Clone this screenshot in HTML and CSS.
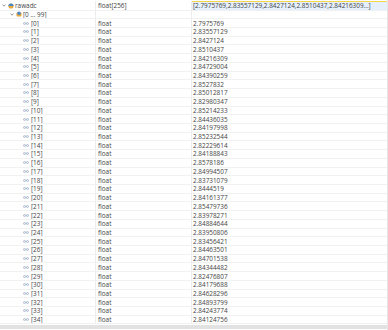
FILE: index.html
```html
<!DOCTYPE html>
<html lang="en">
  <head>
    <meta charset="UTF-8" />
    <title>Variables</title>
    <link rel="stylesheet" href="styles.css">
  </head>

  <body>
    <div class="view">
      <div class="tree" id="tree">
        <div class="row top">
          <div class="cell name lvl0">
            <svg class="twisty" viewBox="0 0 4 3"><path d="M0.5 0.6 L2 2.2 L3.5 0.6" fill="none" stroke="#6a6a6a" stroke-width="0.7"/></svg>
            <svg class="ico" viewBox="0 0 6 6"><circle cx="3" cy="3" r="2.6" fill="#e7a93a"/><path d="M0.4 3 A2.6 2.6 0 0 1 5.6 3 Z" fill="#4a86c8"/></svg>
            <span>rawadc</span>
          </div>
          <div class="cell type">float[256]</div>
          <div class="cell value sel">[2.7975769,2.83557129,2.8427124,2.8510437,2.84216309...]</div>
        </div>
        <div class="row">
          <div class="cell name lvl1">
            <svg class="twisty" viewBox="0 0 4 3"><path d="M0.5 0.6 L2 2.2 L3.5 0.6" fill="none" stroke="#6a6a6a" stroke-width="0.7"/></svg>
            <svg class="ico" viewBox="0 0 6 6"><rect x="0.5" y="1.5" width="5" height="4" rx="0.8" fill="#e7a93a"/><circle cx="3" cy="2.2" r="1.8" fill="#4a86c8"/></svg>
            <span>[0 ... 99]</span>
          </div>
          <div class="cell type"></div>
          <div class="cell value"></div>
        </div>
      </div>
      <div class="hscroll"></div>
    </div>

    <script>
      // elementy tablicy
      var values = [
        "2.7975769", "2.83557129", "2.8427124", "2.8510437", "2.84216309",
        "2.84729004", "2.84390259", "2.8527832", "2.85012817", "2.82980347",
        "2.85214233", "2.84436035", "2.84197998", "2.85232544", "2.82229614",
        "2.84188843", "2.8578186", "2.84994507", "2.83731079", "2.8444519",
        "2.84161377", "2.85479736", "2.83978271", "2.84884644", "2.83950806",
        "2.83456421", "2.84463501", "2.84701538", "2.84344482", "2.82476807",
        "2.84179688", "2.84628296", "2.84893799", "2.84243774", "2.84124756"
      ];
      var tree = document.getElementById("tree");
      var link =
        '<svg class="link" viewBox="0 0 7 3"><ellipse cx="1.8" cy="1.5" rx="1.4" ry="1" fill="none" stroke="#7f93b5" stroke-width="0.7"/><ellipse cx="5.2" cy="1.5" rx="1.4" ry="1" fill="none" stroke="#7f93b5" stroke-width="0.7"/></svg>';
      for (var i = 0; i < values.length; i++) {
        var row = document.createElement("div");
        row.className = "row";
        row.innerHTML =
          '<div class="cell name lvl2">' + link + "<span>[" + i + "]</span></div>" +
          '<div class="cell type">float</div>' +
          '<div class="cell value">' + values[i] + "</div>";
        tree.appendChild(row);
      }
    </script>
  </body>
</html>
```

FILE: styles.css
```css
* {
  padding: 0;
  margin: 0;
  box-sizing: border-box;
}

html,
body {
  width: 100%;
  height: 100%;
  background: #fff;
}

.view {
  display: flex;
  flex-direction: column;
  width: 388px;
  height: 330px;
  border-right: 1px solid #e6e6e6;
  font-family: "Open Sans", "Noto Sans", sans-serif;
  font-size: 6.4px;
  color: #444;
  overflow: hidden;
}

.tree {
  padding-top: 1px;
}

.row {
  display: grid;
  grid-template-columns: 96px 96px 1fr;
  height: 8.72px;
  border-bottom: 1px solid #f1f1f1;
}

.row.top {
  height: 9.62px;
}

.cell {
  display: flex;
  align-items: center;
  white-space: nowrap;
  overflow: hidden;
  border-right: 1px solid #ececec;
}

.type {
  padding-left: 2px;
}

.value {
  padding-left: 1px;
  border-right: none;
}

.row.top .name,
.row.top .type {
  padding-top: 1px;
}

.value.sel {
  background: #e6f0fb;
  border-top: 1px solid #f4d648;
}

.lvl0 {
  padding-left: 2px;
}

.lvl1 {
  padding-left: 10px;
}

.lvl2 {
  padding-left: 23px;
}

.twisty {
  width: 4px;
  height: 3px;
  margin-right: 2px;
}

.ico {
  width: 6px;
  height: 6px;
  margin-right: 1px;
}

.link {
  width: 6px;
  height: 3px;
  margin-right: 2px;
}

.hscroll {
  height: 4px;
  margin-top: 1px;
  background: #e2e2e2;
}
```
